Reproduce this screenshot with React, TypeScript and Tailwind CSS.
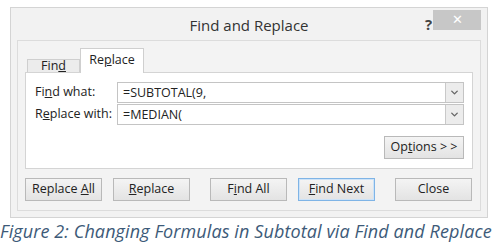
import { ChevronDown } from 'lucide-react'

function Btn({ children, focused = false, className = '' }: { children: React.ReactNode; focused?: boolean; className?: string }) {
  return (
    <div
      className={`h-[23px] flex items-center justify-center text-[12.5px] text-[#222] border bg-gradient-to-b from-[#f4f4f4] to-[#e3e3e3] ${
        focused ? 'border-[#7fb4e6] shadow-[inset_0_0_0_1px_#cde3f8]' : 'border-[#b9b9b9]'
      } ${className}`}
    >
      {children}
    </div>
  )
}

function Field({ value, ul, rest, pre }: { value: string; pre: string; ul: string; rest: string }) {
  return (
    <div className="flex items-center h-[21px]">
      <div className="w-[82px] text-[12.5px] text-[#222]">
        {pre}
        <span className="underline">{ul}</span>
        {rest}
      </div>
      <div className="flex-1 h-full flex border border-[#c4c4c4] bg-white">
        <div className="flex-1 pl-[5px] text-[12.5px] text-[#222] leading-[19px]">{value}</div>
        <div className="w-[18px] border-l border-[#c9c9c9] bg-[#ececec] flex items-center justify-center">
          <ChevronDown size={11} strokeWidth={3} className="text-[#666]" />
        </div>
      </div>
    </div>
  )
}

export default function App(): React.JSX.Element {
  return (
    <div className="w-[500px] h-[247px] bg-white overflow-hidden" style={{ fontFamily: '"Open Sans", "Noto Sans", sans-serif' }}>
      <div className="pt-[7px] pl-[10px]">
        <div className="w-[478px] h-[211px] border border-[#d4d4d4] bg-[#f2f2f2] flex flex-col">
          {/* title bar */}
          <div className="h-[32px] relative flex items-center justify-center">
            <span className="text-[15px] text-[#333] mt-[2px]">Find and Replace</span>
            <span className="absolute left-[414px] top-[5px] text-[15px] font-bold text-[#444]">?</span>
            <div className="absolute left-[422px] top-[2px] w-[48px] h-[20px] bg-[#c7c7c7] flex items-center justify-center text-white text-[13px]">
              ✕
            </div>
          </div>
          {/* inner frame */}
          <div className="mx-[6px] mb-[6px] flex-1 border border-[#dcdcdc] bg-[#f3f3f3] px-[7px] pt-[7px]">
            {/* tabs */}
            <div className="flex items-end h-[24px] ml-[2px]">
              <div className="w-[53px] h-[13px] border border-b-0 border-[#cfcfcf] bg-[#ececec] text-[12.5px] text-[#222] flex items-end justify-center">
                <span className="leading-[16px] -mb-[2px]">
                  Fin<span className="underline">d</span>
                </span>
              </div>
              <div className="w-[64px] h-[25px] border border-b-0 border-[#cfcfcf] bg-white text-[12.5px] text-[#222] flex items-center justify-center relative z-10 -mb-[1px]">
                <span className="-mt-[1px]">
                  Re<span className="underline">p</span>lace
                </span>
              </div>
            </div>
            {/* content */}
            <div className="h-[97px] border border-[#d4d4d4] bg-white pl-[9px] pr-[8px] pt-[9px]">
              <div className="flex flex-col gap-[1px]">
                <Field pre="Fi" ul="n" rest="d what:" value="=SUBTOTAL(9," />
                <Field pre="R" ul="e" rest="place with:" value="=MEDIAN(" />
              </div>
              <div className="flex justify-end mt-[11px]">
                <Btn className="w-[80px]">
                  <span>
                    Op<span className="underline">t</span>ions &gt; &gt;
                  </span>
                </Btn>
              </div>
            </div>
            {/* bottom buttons */}
            <div className="flex mt-[9px] gap-[11px]">
              <Btn className="w-[77px]">
                <span>
                  Replace <span className="underline">A</span>ll
                </span>
              </Btn>
              <Btn className="w-[77px]">
                <span>
                  <span className="underline">R</span>eplace
                </span>
              </Btn>
              <Btn className="w-[77px] ml-[9px]">
                <span>
                  F<span className="underline">i</span>nd All
                </span>
              </Btn>
              <Btn focused className="w-[77px]">
                <span>
                  <span className="underline">F</span>ind Next
                </span>
              </Btn>
              <Btn className="w-[77px] ml-[9px]">Close</Btn>
            </div>
          </div>
        </div>
      </div>
      <div className="italic text-[18px] text-[#3d5a78] leading-[22px] mt-[2px] whitespace-nowrap tracking-[0.1px]" style={{ fontFamily: '"Open Sans", sans-serif' }}>
        Figure 2: Changing Formulas in Subtotal via Find and Replace
      </div>
    </div>
  )
}
